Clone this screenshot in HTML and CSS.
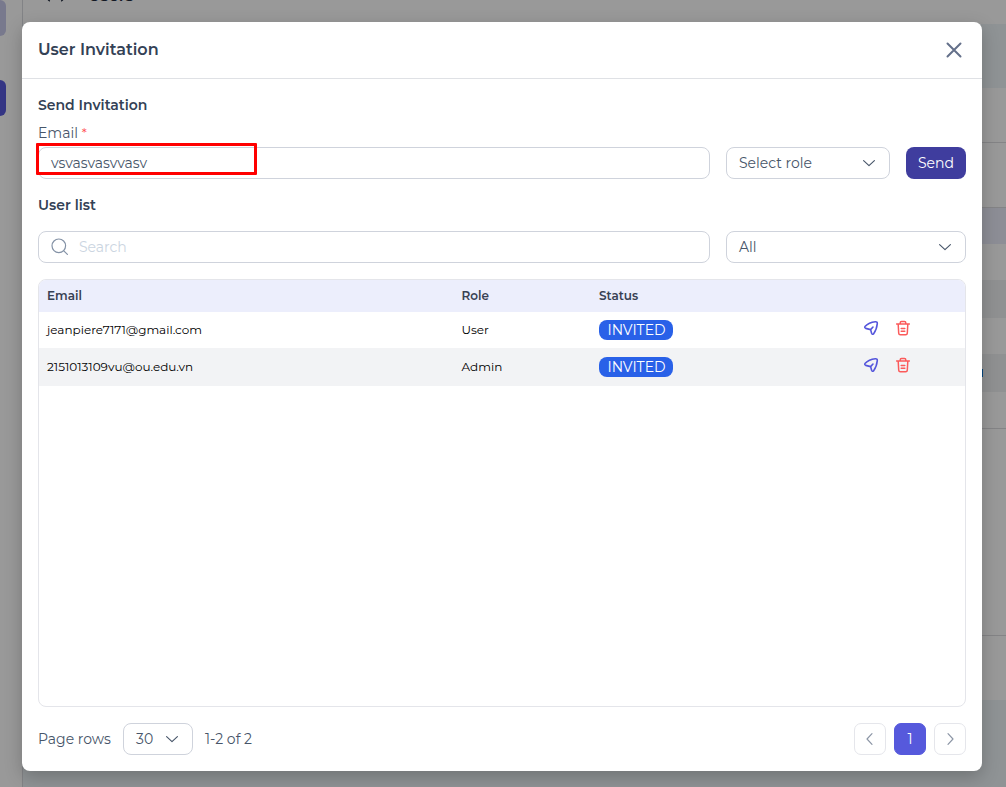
FILE: index.html
```html
<!DOCTYPE html>
<html lang="en">
<head>
<meta charset="utf-8">
<title>User Invitation</title>
<link rel="stylesheet" href="styles.css">
</head>
<body>
<svg class="defs" width="0" height="0">
  <symbol id="down" viewBox="0 0 14 14"><path d="M1.6 4.7 7 9.7l5.4-5"/></symbol>
  <symbol id="plane" viewBox="0 0 16 16"><path d="M2.2 6.2Q5.8 2.4 12.3 1.7 14.4 1.5 14.3 3.5 13.7 9.8 10.5 13.9 9.3 14.9 8.6 13.3L7.6 9.6 2.7 8.4Q1 7.5 2.2 6.2ZM7.6 9.6 10 7"/></symbol>
  <symbol id="trash" viewBox="0 0 16 16"><path d="M1.6 4.1h12.8M5.2 4V2.9Q5.2 1.5 6.5 1.5h3Q10.8 1.5 10.8 2.9V4M3.2 4.2l.5 9q.1 1.5 1.6 1.5h5.4q1.5 0 1.6-1.5l.5-9M6.2 8.4h3.6M6.2 11.2h3.6"/></symbol>
</svg>
<div class="app">
  <aside class="sidebar"><div class="side-item pale"></div><div class="side-item active"></div></aside>
  <main class="page">
    <div class="topbar"><svg width="20" height="3" viewBox="0 0 20 3"><path d="M2.4 0l1 .8M15.6.8l1-.8"/></svg><span class="page-title">Users</span></div>
    <div class="strip"></div>
    <div class="block first"></div>
    <div class="block second"></div>
    <div class="rows"><div class="row head"></div><div class="row"></div><div class="row even"></div><div class="row"></div><div class="row even"><i class="tag"></i></div><div class="row last"></div></div>
    <div class="block tall"></div>
    <div class="block bottom"></div>
  </main>
</div>
<div class="overlay">
  <section class="modal">
    <header class="modal-head">
      <h1>User Invitation</h1>
      <svg class="close" width="16" height="16" viewBox="0 0 16 16"><path d="M1.5 1.5l13 13M14.5 1.5l-13 13"/></svg>
    </header>
    <div class="modal-body">
      <h2>Send Invitation</h2>
      <div class="label">Email <b class="star">*</b></div>
      <div class="fields">
        <div class="control grow"><span>vsvasvasvvasv</span><i class="mark"></i></div>
        <div class="control role"><span>Select role</span><svg class="chev" width="14" height="14"><use href="#down"/></svg></div>
        <button class="send">Send</button>
      </div>
      <h2 class="list-title">User list</h2>
      <div class="fields">
        <div class="control grow search"><svg width="18" height="18" viewBox="0 0 18 18"><circle cx="7.8" cy="7.8" r="6.8"/><path d="m12.8 12.8 3.6 3.6"/></svg><span>Search</span></div>
        <div class="control filter"><span>All</span><svg class="chev" width="14" height="14"><use href="#down"/></svg></div>
      </div>
      <div class="table">
        <div class="tr th"><span>Email</span><span>Role</span><span>Status</span></div>
        <div class="tr"><span>jeanpiere7171@gmail.com</span><span>User</span><span class="badge">INVITED</span><span class="actions"><svg class="plane" width="16" height="16"><use href="#plane"/></svg><svg class="trash" width="16" height="16"><use href="#trash"/></svg></span></div>
        <div class="tr alt"><span>2151013109vu@ou.edu.vn</span><span>Admin</span><span class="badge">INVITED</span><span class="actions"><svg class="plane" width="16" height="16"><use href="#plane"/></svg><svg class="trash" width="16" height="16"><use href="#trash"/></svg></span></div>
      </div>
      <footer class="pager">
        <div class="label-rows">Page rows</div>
        <div class="control size"><span>30</span><svg class="chev" width="14" height="14"><use href="#down"/></svg></div>
        <div class="range">1-2 of 2</div>
        <nav class="pages">
          <button class="pg"><svg width="14" height="14" viewBox="0 0 14 14"><path d="M9 1.6 4 7l5 5.4"/></svg></button>
          <button class="pg current">1</button>
          <button class="pg"><svg width="14" height="14" viewBox="0 0 14 14"><path d="m5 1.6 5 5.4-5 5.4"/></svg></button>
        </nav>
      </footer>
    </div>
  </section>
</div>
</body>
</html>
```
FILE: styles.css
```css
* { box-sizing: border-box; }
body { margin: 0; width: 1006px; height: 787px; overflow: hidden; font: 400 14px/20px Montserrat, Inter, "Open Sans", sans-serif; color: #475569; }
svg { fill: none; stroke: currentColor; stroke-width: 1.15; stroke-linecap: round; stroke-linejoin: round; flex: none; }
.defs { position: absolute; }
h1, h2 { margin: 0; font-weight: 600; color: #334155; }
button { font: inherit; padding: 0; border: 0; }
span { white-space: nowrap; }

/* Page behind the dialog */
.app { display: flex; height: 787px; background: #fff; }
.sidebar { width: 23px; border-right: 1px solid #d9dbe0; flex: none; }
.side-item { width: 6px; height: 36px; border-radius: 0 6px 6px 0; }
.pale { background: #c9caec; }
.active { background: #5759dc; margin-top: 44px; }
.page { flex: 1; display: flex; flex-direction: column; background: linear-gradient(#fff 700px, #eef5f9 700px); }
.topbar { height: 24px; display: flex; gap: 22px; padding-left: 23px; color: #1e293b; }
.topbar svg { stroke-width: 1.3; }
.page-title { margin-top: -14px; font-size: 16px; font-weight: 600; }
.strip { height: 64px; background: #eef5f9; }
.block.first { height: 55px; border-bottom: 1px solid #dcdcdf; }
.block.second { height: 65px; border-bottom: 1px solid #dcdcdf; }
.row { height: 37px; }
.row.head { height: 36px; background: #ecedfb; }
.row.even { height: 38px; background: #f1f2f4; display: flex; justify-content: flex-end; align-items: center; }
.row:nth-child(2), .row:nth-child(4) { height: 36px; }
.row.last { border-bottom: 1px solid #dcdcdf; }
.tag { width: 10px; height: 8px; margin-right: 23px; background: #0874d1; }
.block.tall { height: 207px; border-bottom: 1px solid #dcdcdf; }
.block.bottom { height: 64px; }

/* Dialog */
.overlay { position: absolute; inset: 0; background: rgba(0,0,0,.4); padding: 22px 24px 16px 22px; }
.modal { height: 749px; background: #fff; border-radius: 8px; box-shadow: 0 6px 18px rgba(0,0,0,.22); }
.modal-head { height: 57px; padding: 0 20px 0 16px; border-bottom: 1px solid #dfe1e5; display: flex; align-items: center; justify-content: space-between; }
h1 { font-size: 16px; line-height: 22px; padding-bottom: 1px; }
.close { color: #64708a; stroke-width: 2; }
.modal-body { padding: 16px; }
h2 { font-size: 14px; line-height: 20px; }
.label { height: 20px; margin-top: 8px; }
.star { color: #ff4d4f; font-weight: 400; font-size: 13px; }
.fields { display: flex; gap: 16px; margin-top: 4px; }
.control { position: relative; height: 32px; border: 1px solid #cfd3dc; border-radius: 8px; padding: 0 12px; display: flex; align-items: center; justify-content: space-between; }
.grow { flex: 1; }
.role { width: 164px; }
.filter { width: 240px; }
.chev { margin-right: 1px; }
.mark { position: absolute; left: -3px; top: -5px; width: 221px; height: 32px; border: 3px solid #ff0000; border-radius: 1px; }
.send { width: 60px; height: 32px; border-radius: 8px; background: #3f3d9e; color: #fff; }
.list-title { margin: 16px 0; }
.search { justify-content: flex-start; gap: 10px; color: #cbd5e1; }
.search svg { color: #8492a6; stroke-width: 1.2; }
.table { height: 428px; margin-top: 16px; border: 1px solid #e4e5ea; border-radius: 8px; overflow: hidden; font-size: 12px; line-height: 18px; color: #000; }
.tr { display: grid; grid-template-columns: 414.5px 137.5px 74px 1fr; height: 36px; align-items: center; padding-left: 8px; }
.th { height: 32px; background: #eceefc; color: #384153; font-weight: 600; }
.alt { height: 38px; background: #f2f3f5; }
.badge { height: 20px; border-radius: 8px; background: #2961e8; color: #fff; font-size: 14px; line-height: 20px; text-align: center; text-indent: 1px; }
.actions { display: flex; gap: 16px; padding-left: 190px; margin-top: -4px; }
.plane { color: #5556dc; stroke-width: 1.6; }
.trash { color: #fb5a5a; stroke-width: 1.5; }
.pager { display: flex; align-items: center; margin-top: 16px; height: 32px; }
.label-rows { width: 85px; }
.size { width: 70px; }
.range { margin-left: 12px; }
.pages { margin-left: auto; display: flex; gap: 8px; }
.pg { width: 32px; height: 32px; border: 1px solid #e5e6eb; border-radius: 7px; background: #fff; color: #8b95a5; display: grid; place-items: center; }
.pg.current { background: #5659dc; border-color: #5659dc; color: #fff; }
```
